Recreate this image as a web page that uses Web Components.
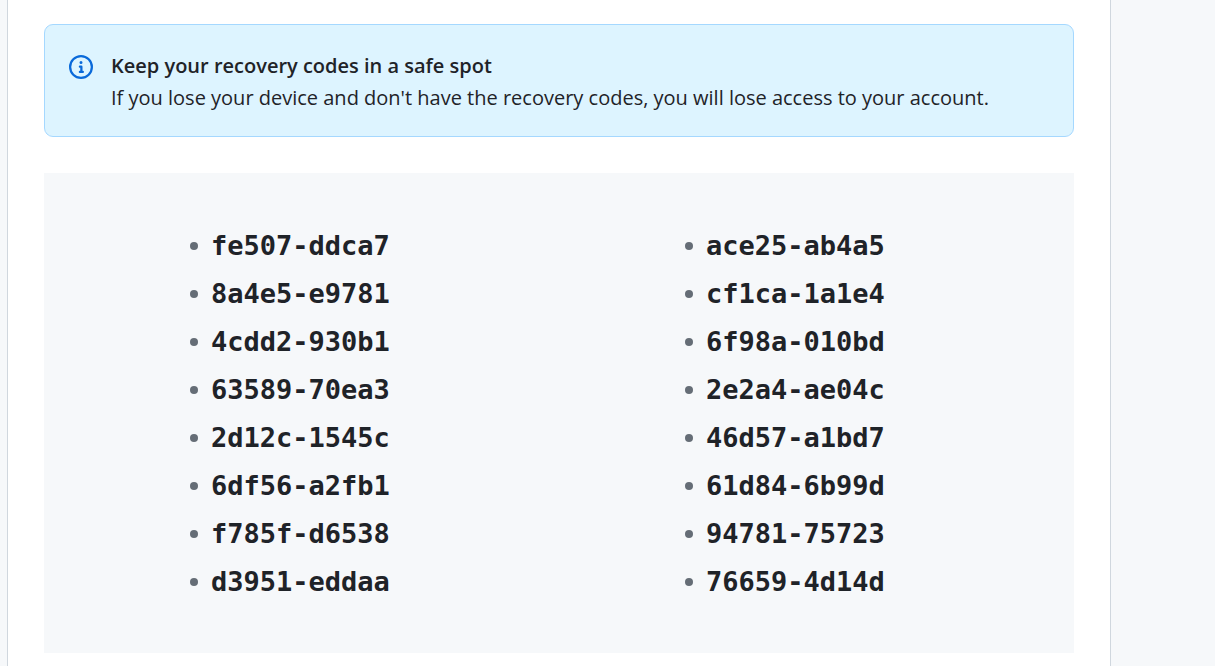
<!DOCTYPE html>
<html lang="en">
<head>
<meta charset="utf-8">
<meta name="viewport" content="width=device-width, initial-scale=1">
<title>Recovery codes</title>
<style>
  body { margin: 0; background: #f6f8fa; color: #1f2328; font-family: "Segoe UI", "Open Sans", "Noto Sans", sans-serif; }
</style>
</head>
<body>
<settings-panel>
  <info-banner>
    <span slot="title">Keep your recovery codes in a safe spot</span>
    If you lose your device and don't have the recovery codes, you will lose access to your account.
  </info-banner>
  <recovery-codes codes="fe507-ddca7 8a4e5-e9781 4cdd2-930b1 63589-70ea3 2d12c-1545c 6df56-a2fb1 f785f-d6538 d3951-eddaa ace25-ab4a5 cf1ca-1a1e4 6f98a-010bd 2e2a4-ae04c 46d57-a1bd7 61d84-6b99d 94781-75723 76659-4d14d"></recovery-codes>
</settings-panel>

<template id="panel-template">
  <style>
    :host { display: block; box-sizing: border-box; min-height: 100vh; margin: 0 104px 0 7px; padding: 24px 36px 12px; background: #fff; border: solid #d0d7de; border-width: 0 1px; }
    main { display: flex; flex-direction: column; gap: 36px; }
  </style>
  <main><slot></slot></main>
</template>

<template id="banner-template">
  <style>
    :host { display: flex; gap: 18px; padding: 25px 24px 22px; background: #ddf4ff; border: 1px solid #a5d8ff; border-radius: 9px; }
    svg { flex: none; width: 24px; height: 24px; margin-top: 5px; fill: #0969da; }
    h2, p { margin: 0; font-size: 20px; line-height: 32px; }
    h2 { font-weight: 600; }
    p { font-weight: 400; }
  </style>
  <svg viewBox="0 0 16 16" aria-hidden="true"><path d="M0 8a8 8 0 1 1 16 0A8 8 0 0 1 0 8Zm8-6.5a6.5 6.5 0 1 0 0 13 6.5 6.5 0 0 0 0-13ZM6.5 7.75A.75.75 0 0 1 7.25 7h1a.75.75 0 0 1 .75.75v2.75h.25a.75.75 0 0 1 0 1.5h-2a.75.75 0 0 1 0-1.5h.25v-2h-.25a.75.75 0 0 1-.75-.75ZM8 6a1 1 0 1 1 0-2 1 1 0 0 1 0 2Z"/></svg>
  <div>
    <h2><slot name="title"></slot></h2>
    <p><slot></slot></p>
  </div>
</template>

<template id="codes-template">
  <style>
    :host { display: block; padding: 49px 20px 47px; background: #f6f8fa; }
    ul { display: grid; grid-template: repeat(8, 48px) / 1fr 1fr; grid-auto-flow: column; margin: 0; padding: 0; list-style: none; }
    li { display: flex; align-items: center; gap: 13px; padding-left: 126px; font: bold 27px/48px "DejaVu Sans Mono", monospace; }
    li::before { content: ""; width: 8px; height: 8px; border-radius: 50%; background: #656d76; }
  </style>
  <ul></ul>
</template>

<script>
  class TemplateElement extends HTMLElement {
    constructor() {
      super();
      const template = document.getElementById(this.constructor.template);
      this.attachShadow({ mode: "open" }).append(template.content.cloneNode(true));
    }
  }

  class SettingsPanel extends TemplateElement {
    static template = "panel-template";
  }

  class InfoBanner extends TemplateElement {
    static template = "banner-template";
  }

  class RecoveryCodes extends TemplateElement {
    static template = "codes-template";
    connectedCallback() {
      const items = this.getAttribute("codes").split(" ").map((code) => {
        const item = document.createElement("li");
        item.textContent = code;
        return item;
      });
      this.shadowRoot.querySelector("ul").replaceChildren(...items);
    }
  }

  customElements.define("settings-panel", SettingsPanel);
  customElements.define("info-banner", InfoBanner);
  customElements.define("recovery-codes", RecoveryCodes);
</script>
</body>
</html>
